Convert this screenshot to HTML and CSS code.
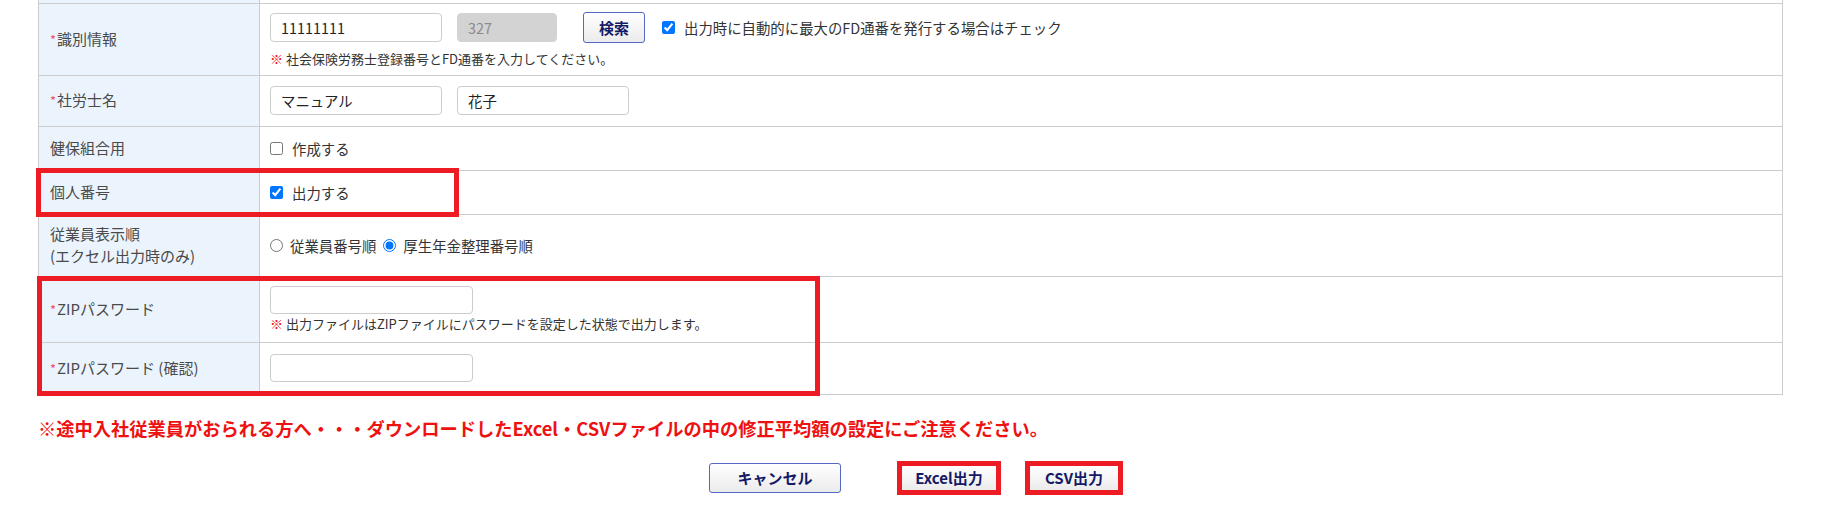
FILE: index.html
```html
<!DOCTYPE html>
<html lang="ja">
<head>
<meta charset="utf-8">
<title>出力設定</title>
<link rel="stylesheet" href="styles.css">
</head>
<body>
<div class="page">
  <table class="form">
    <tr class="cut"><th></th><td></td></tr>
    <tr class="r1">
      <th><span class="req">*</span>識別情報</th>
      <td>
        <div class="line">
          <input class="txt" type="text" value="11111111">
          <input class="txt dis" type="text" value="327" disabled>
          <button class="btn search" type="button">検索</button>
          <label class="chk"><input type="checkbox" checked>出力時に自動的に最大のFD通番を発行する場合はチェック</label>
        </div>
        <p class="note note1"><span class="kome">※</span> 社会保険労務士登録番号とFD通番を入力してください。</p>
      </td>
    </tr>
    <tr class="r2">
      <th><span class="req">*</span>社労士名</th>
      <td>
        <div class="line">
          <input class="txt" type="text" value="マニュアル">
          <input class="txt" type="text" value="花子">
        </div>
      </td>
    </tr>
    <tr class="r3">
      <th>健保組合用</th>
      <td><label class="chk"><input type="checkbox">作成する</label></td>
    </tr>
    <tr class="r4">
      <th class="anchor">個人番号<span class="mark mark-kojin"></span></th>
      <td><label class="chk"><input type="checkbox" checked>出力する</label></td>
    </tr>
    <tr class="r5">
      <th>従業員表示順<br>(エクセル出力時のみ)</th>
      <td>
        <div class="line">
          <label class="rad"><input type="radio" name="order">従業員番号順</label>
          <label class="rad"><input type="radio" name="order" checked>厚生年金整理番号順</label>
        </div>
      </td>
    </tr>
    <tr class="r6">
      <th class="anchor"><span class="req">*</span>ZIPパスワード<span class="mark mark-zip"></span></th>
      <td>
        <input class="txt pw" type="password">
        <p class="note note2"><span class="kome">※</span> 出力ファイルはZIPファイルにパスワードを設定した状態で出力します。</p>
      </td>
    </tr>
    <tr class="r7">
      <th><span class="req">*</span>ZIPパスワード (確認)</th>
      <td><input class="txt pw" type="password"></td>
    </tr>
  </table>

  <p class="warn">※途中入社従業員がおられる方へ・・・ダウンロードしたExcel・CSVファイルの中の修正平均額の設定にご注意ください。</p>

  <div class="actions">
    <button class="btn cancel" type="button">キャンセル</button>
    <span class="hl hl-excel"><button class="btn out" type="button">Excel出力</button></span>
    <span class="hl hl-csv"><button class="btn out" type="button">CSV出力</button></span>
  </div>
</div>
</body>
</html>
```

FILE: styles.css
```css
* { box-sizing: border-box; }

body {
  margin: 0;
  background: #fff;
  color: #333;
  font-family: "Noto Sans CJK JP", "Noto Sans", sans-serif;
}

.page {
  padding: 0 38px;
}

.form {
  width: 100%;
  border-collapse: collapse;
}

.form th,
.form td {
  border: 1px solid #cccccc;
  vertical-align: middle;
}

.form th {
  width: 221px;
  padding: 0 0 0 11px;
  background: #ebf4fc;
  color: #4a4a4a;
  font-size: 15px;
  font-weight: normal;
  line-height: 22px;
  text-align: left;
}

.form td {
  padding: 0 10px;
  font-size: 14.4px;
  color: #333;
}

.cut th,
.cut td {
  border-top: none;
  height: 3px;
  padding: 0;
}

.r1 { height: 72px; }
.r2 { height: 51px; }
.r3 { height: 44px; }
.r4 { height: 44px; }
.r5 { height: 62px; }
.r6 { height: 66px; }
.r7 { height: 52px; }

.req {
  color: #f0506e;
  font-size: 13px;
  margin-right: 1px;
}

.line {
  display: flex;
  align-items: center;
}

.txt {
  width: 172px;
  height: 29px;
  margin: 0 15px 0 0;
  padding: 0 10px;
  border: 1px solid #cccccc;
  border-radius: 4px;
  background: #fff;
  color: #222;
  font-family: inherit;
  font-size: 14.4px;
}

.dis {
  width: 100px;
  margin-right: 26px;
  background: #d3d3d3;
  border-color: #d3d3d3;
  color: #8a8a8a;
}

.pw {
  width: 203px;
  height: 28px;
  display: block;
}

.btn {
  border: 1px solid #5566c4;
  border-radius: 3px;
  background: linear-gradient(#ffffff, #ebebeb);
  color: #161a66;
  font-family: inherit;
  font-size: 15px;
  font-weight: bold;
  padding: 0;
}

.search {
  width: 62px;
  height: 31px;
  margin-right: 17px;
}

.chk,
.rad {
  display: inline-flex;
  align-items: center;
  font-size: 14.4px;
  color: #333;
}

.chk input {
  width: 13px;
  height: 13px;
  margin: 0 9px 0 0;
  accent-color: #0075ff;
}

.rad input {
  width: 13px;
  height: 13px;
  margin: 0 7px 0 0;
  accent-color: #0075ff;
}

.rad + .rad {
  margin-left: 7px;
}

.note {
  margin: 0;
  font-size: 13px;
  line-height: 16px;
  color: #333;
}

.note1 { margin-top: 8px; }
.note2 { margin-top: 2px; }

.kome {
  color: #ee1111;
  font-weight: bold;
}

.anchor {
  position: relative;
}

.mark {
  position: absolute;
  border: 5px solid #ed1c24;
  pointer-events: none;
}

.mark-kojin {
  left: -3px;
  top: -3px;
  width: 423px;
  height: 49px;
}

.mark-zip {
  left: -2px;
  top: -1px;
  width: 783px;
  height: 120px;
}

.warn {
  margin: 20px 0 0;
  color: #ee1111;
  font-size: 18.25px;
  font-weight: bold;
  line-height: 26px;
}

.actions {
  display: flex;
  justify-content: center;
  align-items: center;
  margin-top: 20px;
  padding-left: 11px;
}

.cancel {
  width: 132px;
  height: 30px;
  margin-right: 56px;
}

.hl {
  display: inline-flex;
  border: 5px solid #ed1c24;
  background: #fff;
}

.hl .out {
  height: 24px;
  border: none;
  border-radius: 0;
}

.hl-excel {
  margin-right: 24px;
}

.hl-excel .out { width: 94px; }
.hl-csv .out { width: 88px; }
```
